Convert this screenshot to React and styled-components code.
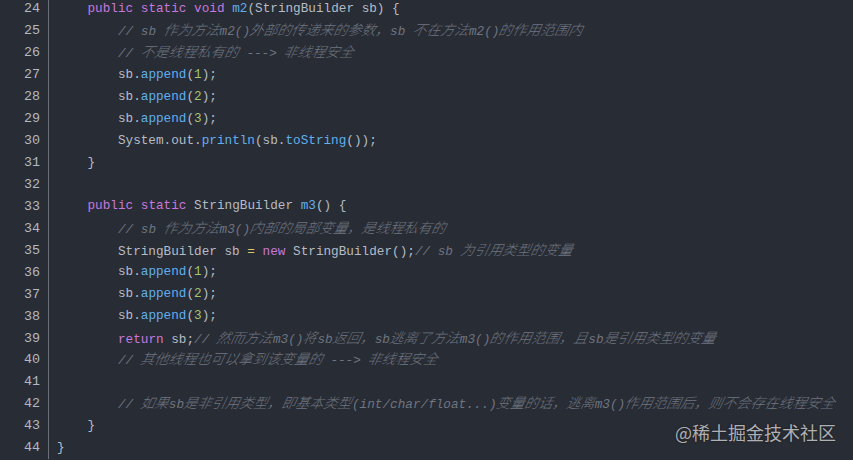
import React from 'react';
import styled, { createGlobalStyle } from 'styled-components';

const GlobalStyle = createGlobalStyle`
  html, body {
    margin: 0;
    padding: 0;
    background: #282c34;
    overflow: hidden;
  }
`;

const Editor = styled.div`
  position: relative;
  width: 853px;
  height: 460px;
  background: #282c34;
  overflow: hidden;
`;

const Lines = styled.div`
  margin-top: -2px;
  display: flex;
  flex-direction: column;
`;

const Row = styled.div`
  display: flex;
  height: 21.95px;
  align-items: center;
`;

const Gutter = styled.div`
  width: 40px;
  padding-right: 8px;
  height: 100%;
  border-right: 1px solid #6b6f78;
  display: flex;
  align-items: center;
  justify-content: flex-end;
  font-family: "Liberation Mono", "DejaVu Sans Mono", monospace;
  font-size: 13.4px;
  color: #b3b8c2;
`;

const Code = styled.div`
  padding-left: 8px;
  white-space: pre;
  line-height: 16px;
  font-family: "Liberation Mono", "DejaVu Sans Mono", "Noto Sans CJK SC", monospace;
  font-size: 12.7px;
  color: #b6bcc6;
`;

const colors = {
  kw: '#c678dd',
  fn: '#61afef',
  num: '#a5c46f',
  op: '#d8c86a',
  cm: '#6f7581',
};

const Tok = styled.span`
  color: ${(p) => colors[p.$t] || 'inherit'};
  font-style: ${(p) => (p.$t === 'cm' ? 'italic' : 'normal')};
`;

const Han = styled.span`
  font-family: "Noto Sans CJK SC", sans-serif;
  font-size: 14px;
  font-weight: 300;
  line-height: 16px;
  display: inline-block;
  transform: skewX(-12deg);
`;

const Watermark = styled.div`
  position: absolute;
  right: 17px;
  bottom: 15px;
  font-family: "Noto Sans CJK SC", "Noto Sans", sans-serif;
  font-size: 18px;
  color: rgba(235, 235, 238, 0.72);
  text-shadow: 0 0 2px rgba(0, 0, 0, 0.6);
`;

const comment = (text) =>
  text.split(/([\u3000-\u9fff\uff00-\uffef]+)/).map((part, i) =>
    /[\u3000-\u9fff\uff00-\uffef]/.test(part) ? <Han key={i}>{part}</Han> : part
  );

const I4 = '    ';
const I8 = '        ';

const append = (n) => [['', I8 + 'sb.'], ['fn', 'append'], ['', '('], ['num', n], ['', ');']];

const code = [
  [24, [['', I4], ['kw', 'public'], ['', ' '], ['kw', 'static'], ['', ' '], ['kw', 'void'], ['', ' '], ['fn', 'm2'], ['', '(StringBuilder sb) {']]],
  [25, [['', I8], ['cm', '// sb 作为方法m2()外部的传递来的参数，sb 不在方法m2()的作用范围内']]],
  [26, [['', I8], ['cm', '// 不是线程私有的 ---> 非线程安全']]],
  [27, append('1')],
  [28, append('2')],
  [29, append('3')],
  [30, [['', I8 + 'System.out.'], ['fn', 'println'], ['', '(sb.'], ['fn', 'toString'], ['', '());']]],
  [31, [['', I4 + '}']]],
  [32, []],
  [33, [['', I4], ['kw', 'public'], ['', ' '], ['kw', 'static'], ['', ' StringBuilder '], ['fn', 'm3'], ['', '() {']]],
  [34, [['', I8], ['cm', '// sb 作为方法m3()内部的局部变量，是线程私有的']]],
  [35, [['', I8 + 'StringBuilder sb '], ['op', '='], ['', ' '], ['kw', 'new'], ['', ' StringBuilder();'], ['cm', '// sb 为引用类型的变量']]],
  [36, append('1')],
  [37, append('2')],
  [38, append('3')],
  [39, [['', I8], ['kw', 'return'], ['', ' sb;'], ['cm', '// 然而方法m3()将sb返回，sb逃离了方法m3()的作用范围，且sb是引用类型的变量']]],
  [40, [['', I8], ['cm', '// 其他线程也可以拿到该变量的 ---> 非线程安全']]],
  [41, []],
  [42, [['', I8], ['cm', '// 如果sb是非引用类型，即基本类型(int/char/float...)变量的话，逃离m3()作用范围后，则不会存在线程安全']]],
  [43, [['', I4 + '}']]],
  [44, [['', '}']]],
];

export default function App() {
  return (
    <>
      <GlobalStyle />
      <Editor>
        <Lines>
          {code.map(([num, toks]) => (
            <Row key={num}>
              <Gutter>{num}</Gutter>
              <Code>
                {toks.map(([t, s], i) => (
                  <Tok key={i} $t={t}>
                    {t === 'cm' ? comment(s) : s}
                  </Tok>
                ))}
              </Code>
            </Row>
          ))}
        </Lines>
        <Watermark>@稀土掘金技术社区</Watermark>
      </Editor>
    </>
  );
}
